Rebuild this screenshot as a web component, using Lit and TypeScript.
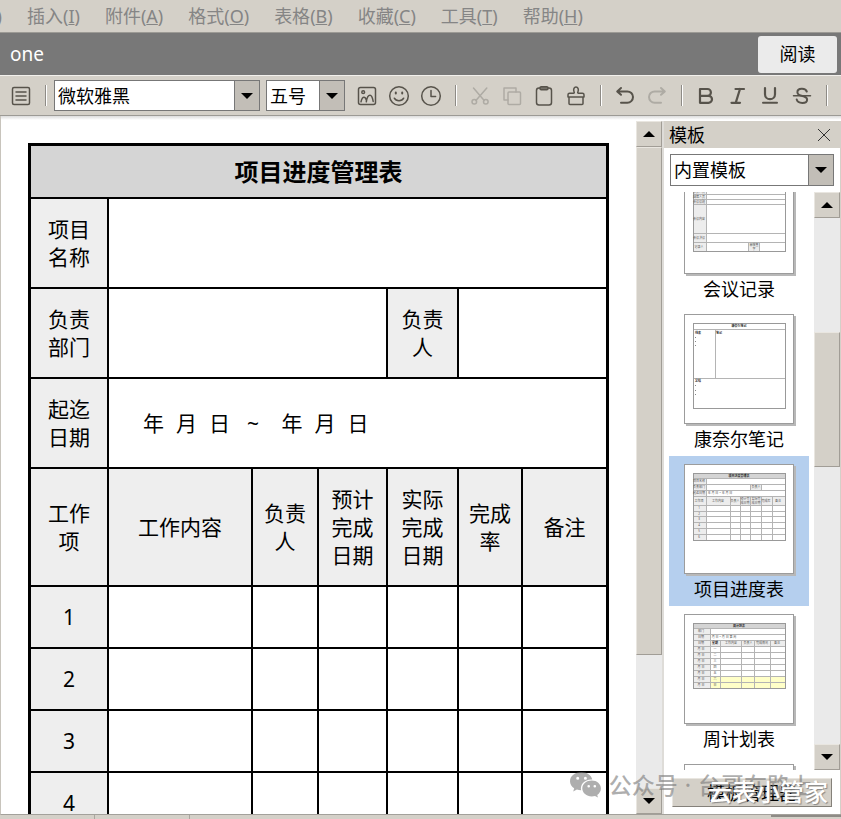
import { LitElement, html, css, svg } from "lit";
import { customElement, property } from "lit/decorators.js";
import { classMap } from "lit/directives/class-map.js";

const reset = css`
  * {
    box-sizing: border-box;
  }
  button,
  select {
    font: inherit;
    color: inherit;
    margin: 0;
    border-radius: 0;
  }
`;

/* ---------- icons ---------- */

const icons: Record<string, unknown> = {
  list: svg`<rect x="3.5" y="3.5" width="17" height="17" rx="1.5"/><path d="M7 8h10M7 12h10M7 16h10"/>`,
  image: svg`<rect x="3.5" y="3.5" width="17" height="17" rx="2"/><circle cx="8.2" cy="8.2" r="1.4"/><path d="M6 17.800c.6-2.800 1.800-4.600 3-4.600s1.800 1.200 2.300 2.800M11.300 17.800c.6-4 2-6.600 3.700-6.600 1.500 0 2.600 2.600 3.200 6.200"/>`,
  smile: svg`<circle cx="12" cy="12" r="9.3"/><path d="M7.3 14.2c1.8 3.4 7.6 3.4 9.4 0"/><path class="dot" d="M8.8 8.4v1M15.2 8.4v1"/>`,
  clock: svg`<circle cx="12" cy="12" r="9.3"/><path d="M12 6.5v6h4.6"/>`,
  cut: svg`<path d="M5.5 4l10.7 12.400M18.800 4L7.900 16.400"/><circle cx="6.3" cy="17.800" r="2.3"/><circle cx="17.8" cy="17.800" r="2.3"/>`,
  copy: svg`<path d="M8 16H4V4h12v4"/><rect x="8" y="8" width="12.5" height="12.5" rx="1"/>`,
  paste: svg`<rect x="4.5" y="4" width="15" height="17" rx="2.5"/><rect x="8" y="2.8" width="8" height="3" rx="1.2"/>`,
  brush: svg`<path d="M4 13v-2.2c0-1 .6-1.6 1.600-1.600H9.500c.8 0 1-.6.6-1.300C8.900 5.200 10.300 3 12 3s3.100 2.200 1.900 4.900c-.4.700-.2 1.300.6 1.300h3.900c1 0 1.600.6 1.600 1.600V13M4 13h16M5 13v6.500c0 .6.400 1 1 1h12c.6 0 1-.4 1-1V13"/>`,
  undo: svg`<path class="bold" d="M8 4L4.200 7.400 8 10.800M4.500 7.400h9.800a5.700 5.700 0 0 1 0 11.400H8"/>`,
  redo: svg`<path class="bold" d="M16 4l3.800 3.400-3.800 3.400M19.500 7.400H9.700a5.700 5.700 0 0 0 0 11.400H16"/>`,
  bold: svg`<path class="heavy" d="M6 5h7.500a3.400 3.400 0 0 1 0 6.800H6zM6 11.800h8.500a3.500 3.500 0 0 1 0 7H6z"/>`,
  italic: svg`<path class="heavy" d="M9.500 5h8.500M5.500 18.800H14M14 5l-4.300 13.800"/>`,
  underline: svg`<path class="heavy" d="M7 4v6.200a5 5 0 0 0 10 0V4"/><path class="bold" d="M5 18.800h14"/>`,
  strike: svg`<path class="bold" d="M16.800 7.600C15.600 3.600 7.300 3.700 7.400 8.200c.1 5.200 9.800 2.600 9.700 7.500-.1 4.300-9.200 4.300-10.400-.2"/><path d="M3.500 11.800h17"/>`,
};

@customElement("tool-button")
class ToolButton extends LitElement {
  static styles = [
    reset,
    css`
      :host {
        display: block;
      }
      button {
        display: flex;
        align-items: center;
        justify-content: center;
        width: 32px;
        height: 32px;
        padding: 0;
        border: 0;
        background: none;
        color: #57534b;
      }
      button:disabled {
        color: #aeaba4;
      }
      svg {
        width: 24px;
        height: 24px;
        fill: none;
        stroke: currentColor;
        stroke-width: 1.5;
        stroke-linejoin: round;
        stroke-linecap: round;
      }
      .bold,
      .dot {
        stroke-width: 2;
      }
      .heavy {
        stroke-width: 2.2;
      }
    `,
  ];
  @property() icon = "list";
  @property() label = "";
  @property({ type: Boolean }) disabled = false;
  render() {
    return html`<button type="button" aria-label=${this.label} ?disabled=${this.disabled}>
      <svg viewBox="0 0 24 24" aria-hidden="true">${icons[this.icon]}</svg>
    </button>`;
  }
}

@customElement("combo-box")
class ComboBox extends LitElement {
  static styles = [
    reset,
    css`
      :host {
        display: block;
      }
      .box {
        display: grid;
        height: 100%;
        border: 1px solid #777;
        background: #fff;
      }
      select,
      .arrow {
        grid-area: 1 / 1;
      }
      select {
        appearance: none;
        width: 100%;
        min-width: 0;
        border: 0;
        padding: 0 28px 0 3px;
        background: none;
        font-size: 18px;
        color: #000;
      }
      .arrow {
        justify-self: end;
        display: flex;
        align-items: center;
        justify-content: center;
        width: 25px;
        border-left: 1px solid #777;
        background: #c2beb7;
        pointer-events: none;
      }
      svg {
        width: 12px;
        height: 6px;
      }
    `,
  ];
  @property() label = "";
  @property() value = "";
  render() {
    return html`<div class="box">
      <select aria-label=${this.label}>
        <option>${this.value}</option>
      </select>
      <span class="arrow"
        ><svg viewBox="0 0 12 6" aria-hidden="true"><path d="M0 0h12L6 6z" /></svg
      ></span>
    </div>`;
  }
}

@customElement("scroll-rail")
class ScrollRail extends LitElement {
  static styles = [
    reset,
    css`
      :host {
        display: flex;
        flex-direction: column;
        width: 26px;
        background: #eaeaea;
      }
      button,
      .thumb {
        flex: none;
        border: 1px solid;
        border-color: #e9e6e0 #a19d96 #a19d96 #e9e6e0;
        background: #d4d0c8;
      }
      button {
        display: flex;
        align-items: center;
        justify-content: center;
        height: 26px;
        padding: 0;
      }
      .track {
        flex: 1;
        display: flex;
        flex-direction: column;
        min-height: 0;
      }
      svg {
        width: 12px;
        height: 6px;
      }
    `,
  ];
  /* share of the track above the thumb, and the thumb's own share */
  @property({ type: Number }) start = 0;
  @property({ type: Number }) size = 50;
  render() {
    return html`
      <button type="button" aria-label="向上滚动">
        <svg viewBox="0 0 12 6" aria-hidden="true"><path d="M0 6h12L6 0z" /></svg>
      </button>
      <div class="track">
        <div style="height:${this.start}%"></div>
        <div class="thumb" style="height:${this.size}%"></div>
      </div>
      <button type="button" aria-label="向下滚动">
        <svg viewBox="0 0 12 6" aria-hidden="true"><path d="M0 0h12L6 6z" /></svg>
      </button>
    `;
  }
}

/* ---------- template previews ---------- */

const label = (x: number, y: number, t: string, cls = "") =>
  svg`<text class=${cls} x=${x} y=${y}>${t}</text>`;

const hLines = (ys: number[], x1 = 9, x2 = 101) => ys.map((y) => `M${x1} ${y}H${x2}`).join("");
const vLines = (xs: number[], y1: number, y2: number) => xs.map((x) => `M${x} ${y1}V${y2}`).join("");

const previews: Record<string, unknown> = {
  meeting: svg`
    <path class="shade" d="M9 9h92v6H9zM9 15h13v72H9zM64 78h11v9H64z"/>
    <path class="grid" d=${hLines([15, 20, 25, 30, 35, 40, 69, 78]) + vLines([22], 15, 87) + vLines([64, 75], 78, 87)}/>
    <rect class="frame" x="9" y="9" width="92" height="78"/>
    ${label(55, 13, "会议记录", "strong")}
    ${label(15, 29, "参会人员")}${label(15, 34, "缺席人员")}${label(15, 39, "会议议题")}
    ${label(15, 56, "会议内容")}${label(15, 75, "会议决议")}${label(15, 84, "记录人")}
    ${label(70, 82, "审核签")}${label(70, 86, "字")}`,
  cornell: svg`
    <path class="grid" d=${hLines([15, 64]) + vLines([31], 15, 64)}/>
    <rect class="frame" x="9" y="9" width="92" height="85"/>
    ${label(55, 13, "康奈尔笔记", "strong")}
    ${label(14, 20, "线索", "strong")}${label(35, 20, "笔记", "strong")}${label(14, 68, "总结", "strong")}
    ${[23, 27, 31, 71, 76, 80].map((y) => svg`<rect class="bullet" x="11" y=${y} width="1" height="1"/>`)}`,
  project: svg`
    <path class="head" d="M9 9h92v5H9z"/>
    <path class="shade" d="M9 14h13v62H9zM66 20h11v6H66zM22 32h79v9H22z"/>
    <path class="grid" d=${
      hLines([14, 20, 26, 32, 41, 47, 52, 58, 64, 70]) +
      vLines([22], 14, 76) +
      vLines([46, 56, 66, 77, 88], 32, 76) +
      vLines([66, 77], 20, 26)
    }/>
    <rect class="frame" x="9" y="9" width="92" height="67"/>
    ${label(55, 13, "项目进度管理表", "strong")}
    ${label(15, 18, "项目名称")}${label(15, 24, "负责部门")}${label(15, 30, "起迄日期")}
    ${label(72, 24, "负责人")}${label(36, 30, "年 月 日 ~ 年 月 日")}
    ${label(15, 38, "工作项")}${label(34, 38, "工作内容")}${label(51, 38, "负责人")}
    ${label(61, 36, "预计完")}${label(61, 40, "成日期")}${label(72, 36, "实际完")}${label(72, 40, "成日期")}
    ${label(82, 38, "完成率")}${label(94, 38, "备注")}
    ${[45, 51, 56, 62, 68, 74].map((y, i) => label(15, y, String(i + 1)))}`,
  week: svg`
    <path class="head" d="M9 9h92v5H9z"/>
    <path class="shade" d="M9 14h17v60H9zM26 26h75v6H26z"/>
    <path class="yellow" d="M26 62h75v12H26z"/>
    <path class="grid" d=${
      hLines([14, 20, 26, 32, 38, 44, 50, 56, 62, 68]) +
      vLines([26], 14, 74) +
      vLines([36, 57, 70, 86], 26, 74)
    }/>
    <rect class="frame" x="9" y="9" width="92" height="65"/>
    ${label(55, 13, "周计划表", "strong")}
    ${label(17, 18, "部门")}${label(17, 24, "日期")}${label(40, 24, "月 日 ~ 月 日 第 周")}
    ${label(17, 30, "日期")}${label(31, 30, "星期", "strong")}${label(47, 30, "工作内容")}
    ${label(64, 30, "负责人")}${label(78, 30, "完成情况")}${label(93, 30, "备注")}
    ${[36, 42, 48, 54, 60, 66, 72].map((y, i) => [label(17, y, "月 日"), label(31, y, "一二三四五六日"[i])])}`,
  blank: svg``,
};

const templates = [
  { id: "meeting", name: "会议记录" },
  { id: "cornell", name: "康奈尔笔记" },
  { id: "project", name: "项目进度表" },
  { id: "week", name: "周计划表" },
  { id: "blank", name: "日计划表" },
];

@customElement("template-panel")
class TemplatePanel extends LitElement {
  static styles = [
    reset,
    css`
      :host {
        display: flex;
        flex-direction: column;
        min-height: 0;
        background: #fff;
        border-right: 1px solid #d4d0c8;
      }
      header {
        flex: none;
        display: flex;
        align-items: center;
        justify-content: space-between;
        height: 27px;
        padding: 0 8px 0 5px;
        background: #d4d0c8;
      }
      h2 {
        margin: 0;
        font-size: 18px;
        font-weight: 400;
        line-height: 26px;
      }
      .close {
        display: flex;
        width: 16px;
        height: 16px;
        padding: 2px;
        border: 0;
        background: none;
      }
      .close svg {
        width: 12px;
        height: 12px;
        stroke: #333;
        fill: none;
      }
      combo-box {
        flex: none;
        height: 32px;
        margin: 6px;
      }
      .body {
        flex: 1;
        display: flex;
        min-height: 0;
      }
      .list {
        flex: 1;
        min-width: 0;
        overflow: hidden;
        padding: 0 5px;
      }
      .item {
        display: flex;
        flex-direction: column;
        align-items: center;
        width: 100%;
        height: 150px;
        padding: 8px 0 0;
        border: 0;
        background: none;
        font-size: 18px;
        line-height: 26px;
        gap: 2px;
      }
      .item.selected {
        background: #b5cfee;
      }
      .sheet {
        width: 110px;
        height: 110px;
        border: 1px solid #9c9c9c;
        background: #fff;
        box-shadow: 2px 2px 0 #b8b8b8;
      }
      .sheet svg {
        display: block;
        width: 108px;
        height: 108px;
      }
      .grid,
      .frame {
        fill: none;
        stroke: #b4b4b4;
        stroke-width: 1;
        shape-rendering: crispEdges;
      }
      .frame {
        stroke: #999;
      }
      .shade {
        fill: #ededed;
      }
      .head {
        fill: #d4d4d4;
      }
      .yellow {
        fill: #ffffc8;
      }
      .bullet {
        fill: #888;
      }
      text {
        font-size: 3px;
        text-anchor: middle;
        fill: #555;
      }
      .strong {
        font-weight: 700;
        fill: #222;
      }
      .manage {
        flex: none;
        height: 29px;
        margin: 8px 8px 7px;
        padding: 0;
        border: 1px solid;
        border-color: #e9e6e0 #85817a #85817a #e9e6e0;
        background: #d4d0c8;
        font-size: 18px;
        line-height: 26px;
      }
    `,
  ];
  firstUpdated() {
    this.renderRoot.querySelector(".list")!.scrollTop = 36;
  }
  render() {
    return html`
      <header>
        <h2>模板</h2>
        <button class="close" type="button" aria-label="关闭">
          <svg viewBox="0 0 12 12" aria-hidden="true"><path d="M0 0l12 12M12 0L0 12" /></svg>
        </button>
      </header>
      <combo-box label="模板分类" value="内置模板"></combo-box>
      <div class="body">
        <div class="list">
          ${templates.map(
            (t) => html`<button
              type="button"
              class=${classMap({ item: true, selected: t.id === "project" })}
            >
              <span class="sheet"><svg viewBox="1 1 108 108" aria-hidden="true">${previews[t.id]}</svg></span>
              <span>${t.name}</span>
            </button>`
          )}
        </div>
        <scroll-rail start="21.7" size="25.7"></scroll-rail>
      </div>
      <button class="manage" type="button">模板管理器</button>
    `;
  }
}

@customElement("project-table")
class ProjectTable extends LitElement {
  static styles = [
    reset,
    css`
      :host {
        display: block;
      }
      table {
        width: 100%;
        table-layout: fixed;
        border: 3px solid #000;
        border-collapse: separate;
        border-spacing: 0;
        font-size: 21px;
        line-height: 28px;
        text-align: center;
      }
      th,
      td {
        height: 90px;
        padding: 0;
        border: 0 solid #000;
        border-width: 2px 0 0 2px;
        font-weight: 400;
        vertical-align: middle;
      }
      th {
        background: #eee;
      }
      th:first-child {
        border-left-width: 0;
      }
      .title {
        height: 51px;
        border-top-width: 0;
        background: #d5d5d5;
        font-size: 24px;
        font-weight: 700;
      }
      .heads th {
        height: 118px;
      }
      .entry th,
      .entry td {
        height: 62px;
      }
      .c-item {
        width: 76px;
      }
      .c-owner {
        width: 66px;
      }
      .c-plan {
        width: 69px;
      }
      .c-real {
        width: 71px;
      }
      .c-rate {
        width: 64px;
      }
      .c-note {
        width: 85px;
      }
      .dates {
        display: flex;
        gap: 17px;
        padding-left: 34px;
        white-space: pre;
      }
      .date {
        display: flex;
        gap: 12px;
      }
    `,
  ];
  render() {
    const date = html`<span class="date"><span>年</span><span>月</span><span>日</span></span>`;
    return html`<table>
      <colgroup>
        <col class="c-item" />
        <col />
        <col class="c-owner" />
        <col class="c-plan" />
        <col class="c-real" />
        <col class="c-rate" />
        <col class="c-note" />
      </colgroup>
      <tbody>
        <tr><th class="title" colspan="7">项目进度管理表</th></tr>
        <tr><th>项目<br />名称</th><td colspan="6"></td></tr>
        <tr>
          <th>负责<br />部门</th><td colspan="3"></td>
          <th>负责<br />人</th><td colspan="2"></td>
        </tr>
        <tr>
          <th>起迄<br />日期</th>
          <td colspan="6"><div class="dates">${date}<span>~ </span>${date}</div></td>
        </tr>
        <tr class="heads">
          <th>工作<br />项</th>
          <th>工作内容</th>
          <th>负责<br />人</th>
          <th>预计<br />完成<br />日期</th>
          <th>实际<br />完成<br />日期</th>
          <th>完成<br />率</th>
          <th>备注</th>
        </tr>
        ${[1, 2, 3, 4].map(
          (n) => html`<tr class="entry">
            <th>${n}</th><td></td><td></td><td></td><td></td><td></td><td></td>
          </tr>`
        )}
      </tbody>
    </table>`;
  }
}

const menus: [string, string][] = [
  ["插入", "I"],
  ["附件", "A"],
  ["格式", "O"],
  ["表格", "B"],
  ["收藏", "C"],
  ["工具", "T"],
  ["帮助", "H"],
];

const tool = (icon: string, name: string, disabled = false) =>
  html`<tool-button icon=${icon} label=${name} ?disabled=${disabled}></tool-button>`;

@customElement("app-root")
class AppRoot extends LitElement {
  static styles = [
    reset,
    css`
      :host {
        display: flex;
        flex-direction: column;
        position: relative;
        height: 100vh;
        overflow: hidden;
        background: #d4d0c8;
        color: #000;
        font-family: "Noto Sans", "Noto Sans CJK SC", sans-serif;
        font-size: 18px;
        line-height: 26px;
      }
      .menu {
        flex: none;
        display: flex;
        align-items: center;
        gap: 25px;
        height: 33px;
        border-bottom: 1px solid #9c9a95;
        color: #858585;
        white-space: nowrap;
      }
      .menu button {
        padding: 0;
        border: 0;
        background: none;
      }
      .cut-off {
        display: flex;
        justify-content: flex-end;
        width: 2px;
        overflow: hidden;
      }
      .titlebar {
        flex: none;
        display: flex;
        align-items: center;
        justify-content: space-between;
        height: 42px;
        padding: 0 4px 0 10px;
        background: #787878;
        color: #fff;
      }
      .titlebar h1 {
        margin: 0;
        font-size: 19px;
        font-weight: 400;
      }
      .read {
        width: 79px;
        height: 37px;
        padding: 0;
        border: 0;
        border-radius: 3px;
        background: #ebebeb;
        color: #000;
      }
      .tools {
        flex: none;
        display: flex;
        align-items: center;
        height: 41px;
        padding-left: 5px;
        border-top: 1px solid #f2f0ec;
        border-bottom: 1px solid #9c9a95;
        overflow: hidden;
      }
      .tools > * {
        flex: none;
      }
      .tools combo-box {
        height: 31px;
        margin-right: 6px;
      }
      .font {
        width: 206px;
      }
      .size {
        width: 79px;
      }
      .sep {
        width: 2px;
        height: 21px;
        margin: 0 7px 0 8px;
        border-left: 1px solid #8e8b86;
        background: #fff;
      }
      main {
        flex: 1;
        display: grid;
        grid-template-columns: minmax(0, 1fr) 26px 179px;
        grid-template-rows: minmax(0, 1fr);
        min-height: 0;
        padding-top: 5px;
        background: linear-gradient(#dcdcdc, #fff 4px);
        border-left: 1px solid #c8c4bc;
        border-bottom: 1px solid #a3a19b;
      }
      .page {
        overflow: hidden;
        padding: 22px 27px 0;
      }
      template-panel {
        border-left: 2px solid #dedcd8;
      }
      .status {
        flex: none;
        display: flex;
        height: 4px;
      }
      .status span {
        width: 95px;
        border-right: 1px solid #aaa69f;
      }
      .grip {
        width: 70px;
        height: 2px;
        margin-left: auto;
        background: #8e8b86;
      }
      .watermark {
        position: absolute;
        right: 28px;
        bottom: 18px;
        display: flex;
        align-items: center;
        gap: 7px;
        color: rgba(120, 120, 120, 0.6);
        font-size: 23px;
        font-weight: 500;
        line-height: 32px;
        pointer-events: none;
        white-space: nowrap;
      }
      .watermark svg {
        width: 32px;
        height: 26px;
      }
      .brand {
        position: absolute;
        right: 13px;
        bottom: 11px;
        color: #fff;
        font-size: 24px;
        font-weight: 500;
        line-height: 32px;
        text-shadow: 1px 1px 1px #888;
        pointer-events: none;
      }
    `,
  ];
  render() {
    return html`
      <nav class="menu">
        <span class="cut-off">)</span>
        ${menus.map(([name, key]) => html`<button type="button">${name}(<u>${key}</u>)</button>`)}
      </nav>
      <div class="titlebar">
        <h1>one</h1>
        <button class="read" type="button">阅读</button>
      </div>
      <div class="tools">
        ${tool("list", "大纲")}
        <span class="sep"></span>
        <combo-box class="font" label="字体" value="微软雅黑"></combo-box>
        <combo-box class="size" label="字号" value="五号"></combo-box>
        ${tool("image", "图片")}${tool("smile", "表情")}${tool("clock", "时间")}
        <span class="sep"></span>
        ${tool("cut", "剪切", true)}${tool("copy", "复制", true)}${tool("paste", "粘贴")}${tool("brush", "格式刷")}
        <span class="sep"></span>
        ${tool("undo", "撤销")}${tool("redo", "重做", true)}
        <span class="sep"></span>
        ${tool("bold", "加粗")}${tool("italic", "斜体")}${tool("underline", "下划线")}${tool("strike", "删除线")}
        <span class="sep"></span>
      </div>
      <main>
        <section class="page"><project-table></project-table></section>
        <scroll-rail start="0" size="79.3"></scroll-rail>
        <template-panel></template-panel>
      </main>
      <footer class="status"><span></span><span></span><i class="grip"></i></footer>
      <div class="watermark">
        <svg viewBox="0 0 32 26" fill="currentColor" aria-hidden="true">
          <path
            fill-rule="evenodd"
            d="M11.500 0C5.100 0 0 4.100 0 9.200c0 2.900 1.600 5.400 4.200 7.100L3.200 19.500l3.700-1.900c1.300.4 2.600.6 4.200.6-1.200-5.600 3.500-10.700 10-10.700h1.200C21.300 3.200 16.900 0 11.500 0zM7.700 4.700a1.500 1.500 0 1 1 0 3 1.500 1.500 0 0 1 0-3zm7.700 0a1.500 1.500 0 1 1 0 3 1.500 1.500 0 0 1 0-3z"
          />
          <path
            fill-rule="evenodd"
            d="M21.800 8.600c-5.300 0-9.500 3.500-9.500 7.900s4.200 7.900 9.500 7.900c1.100 0 2.200-.2 3.200-.5l3 1.700-.8-2.700c2.300-1.500 3.700-3.800 3.700-6.400 0-4.400-4-7.900-9.100-7.900zm-3.100 4.300a1.300 1.300 0 1 1 0 2.600 1.300 1.300 0 0 1 0-2.600zm6.100 0a1.300 1.300 0 1 1 0 2.600 1.300 1.300 0 0 1 0-2.600z"
          />
        </svg>
        <span>公众号</span><span>·</span><span>台哥在路上</span>
      </div>
      <div class="brand">云表小管家</div>
    `;
  }
}
